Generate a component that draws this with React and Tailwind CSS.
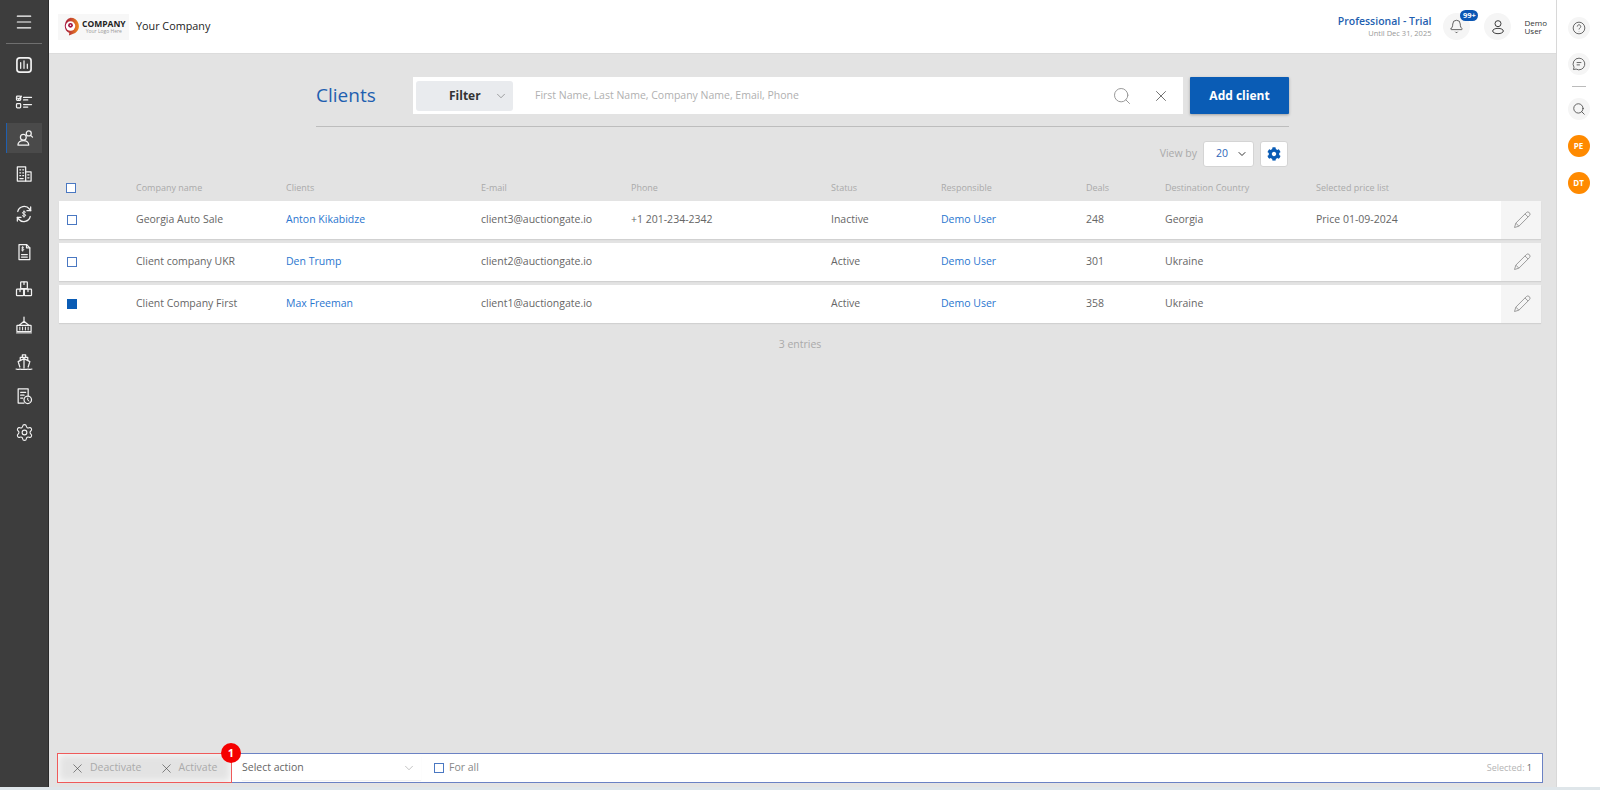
import React from 'react';
import { Settings, ChevronDown, X, Search, Bell, Menu } from 'lucide-react';
import { FaCog } from 'react-icons/fa';

const font = { fontFamily: '"Open Sans", "Liberation Sans", sans-serif' };

// sidebar drawings, all in a 24 box
const sideIcons = [
  <>
    <rect x="3.5" y="3.5" width="17" height="17" rx="3.5" strokeWidth="2" />
    <path d="M8 9v7M12 7v9M16 11v5" />
  </>,
  <>
    <rect x="3" y="5" width="5" height="5" rx="1" />
    <path d="M4.5 7.5l1.2 1.2L9 5M11.5 6.5H21M11.5 9.5h5" />
    <rect x="3" y="14" width="5" height="5" rx="1" />
    <path d="M11.5 15H21M11.5 18h5" />
  </>,
  <>
    <circle cx="10" cy="11" r="3.5" />
    <path d="M3.5 20.5c0-3.5 3-5.5 6.5-5.5s6.5 2 6.5 5.5z" />
    <circle cx="16.5" cy="6.5" r="3" />
    <path d="M18.8 8.8L21 11" />
  </>,
  <>
    <rect x="4" y="3.5" width="10" height="17" />
    <path d="M14 9.5h6.5v11H14M7 7h1M10.500 7h1M7 10.500h1M10.500 10.500h1M7 14h1M10.500 14h1M7 17.500h4M16.500 13h1.500M16.500 16.500h1.500" />
  </>,
  <>
    <path d="M4.500 9a8 8 0 0 1 14-3l1.500 2M19.500 15a8 8 0 0 1-14 3L4 16" />
    <path d="M20 3.500V8h-4.500M4 20.500V16h4.500" />
    <path d="M14 9.800c-.500-.800-3.800-1-3.800.8 0 1.900 3.800 1 3.800 2.900 0 1.700-3.300 1.600-4 .6M12 8.200v7.600" strokeWidth="1.200" />
  </>,
  <>
    <path d="M6 3h9l4 4v14H6z" />
    <path d="M15 3v4h4M9 15h7M9 18h7" />
    <path d="M11.500 6.500c-.500-.500-2.300-.500-2.300.7s2.500.7 2.500 1.900-2 1.200-2.700.6M10.400 5.500v5.500" strokeWidth="1.100" />
  </>,
  <>
    <rect x="8" y="3.500" width="8" height="8" rx=".8" />
    <rect x="3" y="12" width="8.500" height="8" rx=".8" />
    <rect x="12.500" y="12" width="8.500" height="8" rx=".8" />
    <path d="M12 3.500v3M7.200 12v3M16.800 12v3" />
  </>,
  <>
    <path d="M12 2.500v5M12 7.500l-6 5M12 7.500l6 5" />
    <rect x="3.500" y="12.500" width="17" height="7.500" rx=".5" />
    <path d="M7 14.500v3.500M10.300 14.500v3.500M13.700 14.500v3.500M17 14.500v3.500M3 21.500h18" strokeWidth="1.200" />
  </>,
  <>
    <path d="M10 3.500h4v3h-4zM7.500 10V6.500h9V10" />
    <path d="M12 8l7 3.500-2 6.500M12 8l-7 3.500 2 6.500M12 8v11" />
    <path d="M2.500 20.500c2 1.200 3 0 4.700 0s2.400 1.200 4.800 0c2.400 1.200 3 0 4.800 0s2.700 1.200 4.700 0" />
  </>,
  <>
    <path d="M12 20.500H5V3.500h12v8" />
    <path d="M8 7.500h6M8 11h4M8 14.500h2.500" />
    <circle cx="16.500" cy="16.500" r="4.500" />
    <path d="M16.500 14.500v2.500l1.500 1" strokeWidth="1.200" />
  </>,
];

// the icons are not evenly spaced in the picture
const sideGaps = ['', '', '', '', 'mt-[3px]', 'mt-[2px]', '', '', '', '-mt-[2px]'];

function SideIcon({ children }) {
  return (
    <svg viewBox="0 0 24 24" fill="none" stroke="currentColor" strokeWidth="1.500" strokeLinecap="round" strokeLinejoin="round" className="w-[20px] h-[20px]">
      {children}
    </svg>
  );
}

function Sidebar() {
  return (
    <div className="w-[49px] shrink-0 bg-[#3d3d3d] border-r border-[#2b2b2b] flex flex-col items-center text-[#f2f2f2]">
      <div className="h-[43px] w-full flex items-center justify-center text-white">
        <Menu size={20} strokeWidth={1.4} />
      </div>
      <div className="w-[36px] h-px bg-[#6f6f6f]"></div>
      <div className="mt-[3px] flex flex-col items-center">
        {sideIcons.map((icon, i) => (
          <div
            key={i}
            className={
              i === 2
                ? 'w-[36px] h-[30px] mt-[3px] mb-[3px] flex items-center justify-center bg-[#4a4a4a] border-l border-[#1f5fb0]'
                : 'w-[36px] h-[36.500px] flex items-center justify-center ' + sideGaps[i]
            }
          >
            <SideIcon>{icon}</SideIcon>
          </div>
        ))}
        <div className="w-[36px] h-[36px] flex items-center justify-center">
          <Settings size={19} strokeWidth={1.4} />
        </div>
      </div>
    </div>
  );
}

function Header() {
  return (
    <div className="h-[54px] shrink-0 bg-white border-b border-[#dcdcdc] flex items-center pl-[9px] pr-[9px]">
      <div className="w-[71px] h-[26px] bg-[#f7f7f7] flex items-center pl-[3px] gap-[2px]">
        <svg viewBox="0 0 24 24" className="w-[19px] h-[21px] shrink-0">
          <defs>
            <linearGradient id="pin" x1="0" y1="0" x2="1" y2="0">
              <stop offset="0" stopColor="#a3123f" />
              <stop offset="1" stopColor="#f08a1d" />
            </linearGradient>
          </defs>
          <path d="M12 1a10.500 10.500 0 0 1 6 19.100L10 23.500l.5-3.200A10.500 10.500 0 0 1 12 1z" fill="url(#pin)" />
          <circle cx="12" cy="11.500" r="6" fill="#fff" />
          <circle cx="12" cy="10.500" r="3" fill="#a3123f" />
          <circle cx="12" cy="10.500" r="1" fill="#fff" />
        </svg>
        <div className="flex flex-col leading-none">
          <span className="text-[8.500px] font-bold text-[#222] leading-[9px]">COMPANY</span>
          <span className="text-[5px] text-[#999] leading-[7px] text-center">Your Logo Here</span>
        </div>
      </div>
      <span className="ml-[7px] text-[10.800px] text-[#222]">Your Company</span>
      <div className="ml-auto flex flex-col items-end">
        <span className="text-[10.500px] leading-[14px] font-semibold text-[#1f5fb0]">Professional - Trial</span>
        <span className="text-[7.500px] leading-[11px] text-[#999]">Until Dec 31, 2025</span>
      </div>
      <div className="relative ml-[12px] w-[27px] h-[27px] rounded-full bg-[#f5f5f5] flex items-center justify-center text-[#333]">
        <Bell size={15} strokeWidth={1.2} />
        <span className="absolute -top-[3px] left-[17px] w-[18px] h-[11px] rounded-full bg-[#0b57b4] text-white text-[7.500px] leading-[11px] font-bold text-center">99+</span>
      </div>
      <div className="ml-[14px] w-[27px] h-[27px] rounded-full bg-[#f5f5f5] flex items-center justify-center text-[#333]">
        <svg viewBox="0 0 24 24" fill="none" stroke="currentColor" strokeWidth="1.400" className="w-[16px] h-[16px]">
          <circle cx="12" cy="7" r="4.500" />
          <ellipse cx="12" cy="18" rx="8" ry="4" />
        </svg>
      </div>
      <div className="ml-[13px] flex flex-col text-[8px] leading-[8px] text-[#333]">
        <span>Demo</span>
        <span>User</span>
      </div>
    </div>
  );
}

function Toolbar() {
  return (
    <div className="ml-[267px] w-[973px] h-[73px] shrink-0 pt-[23px] border-b border-[#bdbdbd]">
      <div className="flex items-center h-[37px]">
        <h1 className="w-[97px] text-[19px] font-medium text-[#1f5fb0]">Clients</h1>
        <div className="w-[770px] h-[37px] bg-white flex items-center pl-[3px]">
          <div className="w-[97px] h-[30px] bg-[#e9ebee] rounded-[3px] flex items-center">
            <span className="ml-[33px] text-[12px] font-bold text-[#333]">Filter</span>
            <ChevronDown size={14} strokeWidth={1} className="ml-[13px] text-[#666]" />
          </div>
          <span className="ml-[22px] text-[10.500px] text-[#b0b0b0]">First Name, Last Name, Company Name, Email, Phone</span>
          <Search size={20} strokeWidth={1.200} className="ml-auto text-[#999]" />
          <X size={18} strokeWidth={1.100} className="ml-[20px] mr-[13px] text-[#555]" />
        </div>
        <button className="ml-[7px] w-[99px] h-[37px] bg-[#0a5cb5] text-white text-[12px] font-bold rounded-[1px] shadow-[0_1px_3px_rgba(0,0,0,0.3)]">Add client</button>
      </div>
    </div>
  );
}

const clients = [
  { company: 'Georgia Auto Sale', name: 'Anton Kikabidze', email: 'client3@auctiongate.io', phone: '+1 201-234-2342', status: 'Inactive', deals: '248', country: 'Georgia', price: 'Price 01-09-2024', checked: false },
  { company: 'Client company UKR', name: 'Den Trump', email: 'client2@auctiongate.io', phone: '', status: 'Active', deals: '301', country: 'Ukraine', price: '', checked: false },
  { company: 'Client Company First', name: 'Max Freeman', email: 'client1@auctiongate.io', phone: '', status: 'Active', deals: '358', country: 'Ukraine', price: '', checked: true },
];

const headers = ['Company name', 'Clients', 'E-mail', 'Phone', 'Status', 'Responsible', 'Deals', 'Destination Country', 'Selected price list'];

const gridCols = 'grid grid-cols-[77px_150px_195px_150px_200px_110px_145px_79px_151px_185px_40px]';

function Checkbox({ checked, className }) {
  return (
    <span className={'block w-[10px] h-[10px] border ' + (checked ? 'bg-[#0a5cb5] border-[#0a5cb5] ' : 'bg-white border-[#4a78c2] ') + (className || '')}></span>
  );
}

function PencilIcon() {
  return (
    <svg viewBox="0 0 24 24" fill="none" stroke="#999999" strokeWidth="1.100" className="w-[21px] h-[21px]">
      <path d="M4 20l1.500-5L17.500 3a2 2 0 0 1 3.500 3.500L9 18.500z" />
      <path d="M5.500 15L9 18.500M16 4.500l3.500 3.500" />
    </svg>
  );
}

function Table() {
  return (
    <div className="ml-[10px] mr-[15px] mt-[8px] shrink-0">
      <div className={gridCols + ' h-[26px] items-center text-[9px] text-[#aaaaaa]'}>
        <div className="pl-[7px]"><Checkbox /></div>
        {headers.map(h => <div key={h} className="whitespace-nowrap">{h}</div>)}
      </div>
      <div className="flex flex-col gap-[4px]">
        {clients.map(c => (
          <div key={c.email} className={gridCols + ' h-[38px] bg-white items-center text-[10.500px] text-[#666] shadow-[0_1px_1px_rgba(0,0,0,0.08)]'}>
            <div className="pl-[8px]"><Checkbox checked={c.checked} /></div>
            <div>{c.company}</div>
            <div className="text-[#2a76cf]">{c.name}</div>
            <div>{c.email}</div>
            <div>{c.phone}</div>
            <div>{c.status}</div>
            <div className="text-[#2a76cf]">Demo User</div>
            <div>{c.deals}</div>
            <div className="whitespace-nowrap">{c.country}</div>
            <div className="whitespace-nowrap">{c.price}</div>
            <div className="h-full bg-[#f5f5f5] flex items-center justify-center"><PencilIcon /></div>
          </div>
        ))}
      </div>
      <div className="mt-[14px] text-center text-[10.500px] text-[#aaa]">3 entries</div>
    </div>
  );
}

function BottomBar() {
  return (
    <div className="mt-auto mb-[4px] ml-[8px] mr-[13px] h-[30px] shrink-0 flex">
      <div className="relative w-[175px] border border-[#ef5a5a] flex items-center text-[10.500px] text-[#aaa] shadow-[inset_0_0_8px_#fff]">
        <X size={15} strokeWidth={1} className="ml-[12px] text-[#444]" />
        <span className="ml-[5px]">Deactivate</span>
        <X size={15} strokeWidth={1} className="ml-[17px] text-[#444]" />
        <span className="ml-[5px]">Activate</span>
        <span className="absolute -top-[11px] -right-[10px] w-[20px] h-[20px] rounded-full bg-[#f50000] text-white text-[11px] font-bold leading-[20px] text-center">1</span>
      </div>
      <div className="flex-1 bg-white border border-l-0 border-[#6b82c4] flex items-center text-[10.500px]">
        <div className="w-[179px] ml-[10px] flex items-center shadow-[0_1px_1px_rgba(0,0,0,0.05)] h-[24px] text-[#666]">
          <span>Select action</span>
          <ChevronDown size={14} strokeWidth={1} className="ml-auto mr-[5px] text-[#999]" />
        </div>
        <Checkbox className="ml-[13px]" />
        <span className="ml-[5px] text-[#888]">For all</span>
        <span className="ml-auto mr-[10px] text-[9px] text-[#b5b5b5]">Selected: <span className="text-[#666]">1</span></span>
      </div>
    </div>
  );
}

function RightRail() {
  const circle = 'w-[22px] h-[22px] rounded-full flex items-center justify-center';
  return (
    <div className="w-[44px] shrink-0 bg-white border-l border-[#d8d8d8] flex flex-col items-center pt-[17px]">
      <div className={circle + ' bg-[#f5f5f5] text-[#555]'}>
        <svg viewBox="0 0 24 24" fill="none" stroke="currentColor" strokeWidth="1.500" className="w-[14px] h-[14px]">
          <circle cx="12" cy="12" r="10" />
          <path d="M9 9.500a3 3 0 1 1 4.500 2.600c-1 .6-1.500 1.200-1.500 2.400M12 17.500v.5" />
        </svg>
      </div>
      <div className={circle + ' bg-[#f5f5f5] text-[#555] mt-[14px]'}>
        <svg viewBox="0 0 24 24" fill="none" stroke="currentColor" strokeWidth="1.500" className="w-[14px] h-[14px]">
          <path d="M12 2a10 10 0 1 1-5 18.700L2.500 21.500l1-4A10 10 0 0 1 12 2z" />
          <path d="M8 9.500h8M8 13.500h5.500" />
        </svg>
      </div>
      <div className="w-[14px] h-px bg-[#bbb] mt-[11px]"></div>
      <div className={circle + ' bg-[#f5f5f5] text-[#444] mt-[11px]'}>
        <Search size={14} strokeWidth={1.400} />
      </div>
      <div className={circle + ' bg-[#ff8a00] text-white text-[8px] font-bold mt-[15px]'}>PE</div>
      <div className={circle + ' bg-[#ff8a00] text-white text-[8px] font-bold mt-[15px]'}>DT</div>
    </div>
  );
}

function App() {
  return (
    <div className="w-[1600px] h-[790px] overflow-hidden flex flex-col bg-[#dfe6ea]" style={font}>
      <div className="h-[787px] flex">
        <Sidebar />
        <div className="flex-1 min-w-0 flex flex-col bg-[#e3e3e3]">
          <Header />
          <Toolbar />
          <div className="h-[26px] mt-[14px] shrink-0 ml-[10px] mr-[268px] flex items-center justify-end">
            <span className="text-[10.500px] text-[#aaa]">View by</span>
            <div className="ml-[6px] w-[51px] h-[26px] bg-white border border-[#d4d4d4] rounded-[3px] flex items-center pl-[12px]">
              <span className="text-[10.500px] text-[#2f66b8]">20</span>
              <ChevronDown size={12} strokeWidth={2} className="ml-[8px] text-[#333]" />
            </div>
            <div className="ml-[6px] w-[28px] h-[26px] bg-white border border-[#d4d4d4] rounded-[3px] flex items-center justify-center">
              <FaCog size={14} className="text-[#0a5cb5]" />
            </div>
          </div>
          <Table />
          <BottomBar />
        </div>
        <RightRail />
      </div>
    </div>
  );
}

export default App;
